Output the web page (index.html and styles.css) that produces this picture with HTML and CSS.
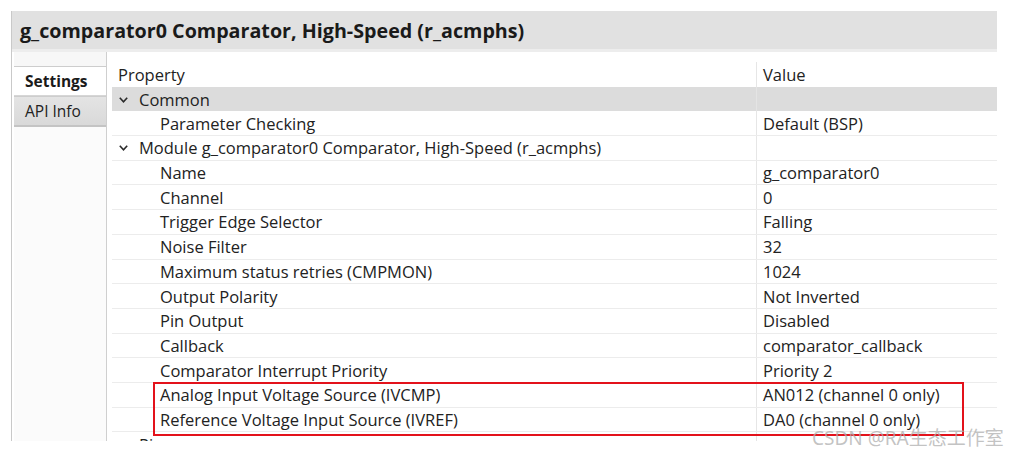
FILE: index.html
```html
<!DOCTYPE html>
<html>
<head>
<meta charset="utf-8">
<link rel="stylesheet" href="styles.css">
</head>
<body>
<div class="frame">
  <div class="title">g_comparator0 Comparator, High-Speed (r_acmphs)</div>
  <div class="main">
    <div class="tabs">
      <div class="tab-gap"></div>
      <div class="tab active">Settings</div>
      <div class="tab">API Info</div>
    </div>
    <div class="grid">
      <div class="row head"><div class="c1">Property</div><div class="c2">Value</div></div>
      <div class="row group"><div class="c1 l1"><svg class="chev" viewBox="0 0 9 6"><polyline points="0.8,0.8 4.5,4.8 8.2,0.8"/></svg>Common</div><div class="c2"></div></div>
      <div class="row"><div class="c1 l2">Parameter Checking</div><div class="c2">Default (BSP)</div></div>
      <div class="row"><div class="c1 l1"><svg class="chev" viewBox="0 0 9 6"><polyline points="0.8,0.8 4.5,4.8 8.2,0.8"/></svg>Module g_comparator0 Comparator, High-Speed (r_acmphs)</div><div class="c2"></div></div>
      <div class="row"><div class="c1 l2">Name</div><div class="c2">g_comparator0</div></div>
      <div class="row"><div class="c1 l2">Channel</div><div class="c2">0</div></div>
      <div class="row"><div class="c1 l2">Trigger Edge Selector</div><div class="c2">Falling</div></div>
      <div class="row"><div class="c1 l2">Noise Filter</div><div class="c2">32</div></div>
      <div class="row"><div class="c1 l2">Maximum status retries (CMPMON)</div><div class="c2">1024</div></div>
      <div class="row"><div class="c1 l2">Output Polarity</div><div class="c2">Not Inverted</div></div>
      <div class="row"><div class="c1 l2">Pin Output</div><div class="c2">Disabled</div></div>
      <div class="row"><div class="c1 l2">Callback</div><div class="c2">comparator_callback</div></div>
      <div class="row"><div class="c1 l2">Comparator Interrupt Priority</div><div class="c2">Priority 2</div></div>
      <div class="row"><div class="c1 l2">Analog Input Voltage Source (IVCMP)</div><div class="c2">AN012 (channel 0 only)</div></div>
      <div class="row"><div class="c1 l2">Reference Voltage Input Source (IVREF)</div><div class="c2">DA0 (channel 0 only)</div></div>
      <div class="row"><div class="c1 l1 pins">Pins</div><div class="c2"></div></div>
    </div>
  </div>
  <div class="highlight"></div>
</div>
<div class="watermark">CSDN @RA生态工作室</div>
</body>
</html>
```
FILE: styles.css
```css
html, body {
  margin: 0;
  padding: 0;
  background: #ffffff;
}
body {
  position: relative;
  width: 1010px;
  height: 453px;
  overflow: hidden;
  font-family: "Open Sans", "Noto Sans", sans-serif;
  color: #222222;
}
.frame {
  position: relative;
  margin: 11px 0 0 11px;
  width: 985px;
  height: 430px;
  border-left: 1px solid #c9c9c9;
  overflow: hidden;
}
.title {
  height: 38px;
  line-height: 40px;
  background: #e1e1e1;
  border-bottom: 3px solid #ededed;
  padding-left: 8px;
  font-size: 19.7px;
  font-weight: 700;
  color: #1a1a1a;
}
.main {
  display: flex;
  height: 389px;
}
.tabs {
  width: 92px;
  margin-left: 2px;
  border-right: 1px solid #cfcfcf;
  display: flex;
  flex-direction: column;
  background: #fbfbfb;
}
.tab-gap {
  height: 14px;
  background: #f7f7f7;
}
.tab {
  height: 28px;
  line-height: 28px;
  padding-left: 11px;
  font-size: 15.5px;
  border-top: 1px solid #cdcdcd;
  background: linear-gradient(#e4e4e4, #d9d9d9);
  border-bottom: 2px solid #c4c4c4;
}
.tab.active {
  background: #ffffff;
  font-weight: 700;
  border-bottom: 1px solid #d6d6d6;
  color: #1a1a1a;
}
.grid {
  flex: 1;
  margin-left: 5px;
  padding-top: 10px;
  font-size: 16.5px;
}
.row {
  display: flex;
  height: 24.7px;
  box-sizing: border-box;
  border-bottom: 1px solid #ececec;
  line-height: 23px;
  white-space: nowrap;
}
.row.head {
  border-bottom: none;
}
.row.group {
  background: #dcdcdc;
  border-bottom: none;
}
.c1 {
  width: 645px;
  padding-left: 6px;
  box-sizing: border-box;
  border-right: 1px solid #e6e6e6;
  display: flex;
  align-items: center;
}
.c2 {
  flex: 1;
  padding-left: 6px;
  display: flex;
  align-items: center;
}
.group .c1 {
  border-right-color: #e4e4e4;
}
.l1 {
  padding-left: 7px;
}
.l2 {
  padding-left: 48px;
}
.pins {
  padding-left: 27px;
}
.chev {
  width: 9px;
  height: 6px;
  margin-right: 11px;
  margin-top: 1px;
  fill: none;
  stroke: #2a2a2a;
  stroke-width: 1.6;
}
.highlight {
  position: absolute;
  left: 141px;
  top: 371px;
  width: 807px;
  height: 50px;
  border: 2px solid #e3121b;
}
.watermark {
  position: absolute;
  left: 812px;
  top: 423px;
  font-family: "Noto Sans", "Noto Sans CJK SC", sans-serif;
  font-size: 19px;
  color: rgba(175, 175, 175, 0.75);
  white-space: nowrap;
}
```
